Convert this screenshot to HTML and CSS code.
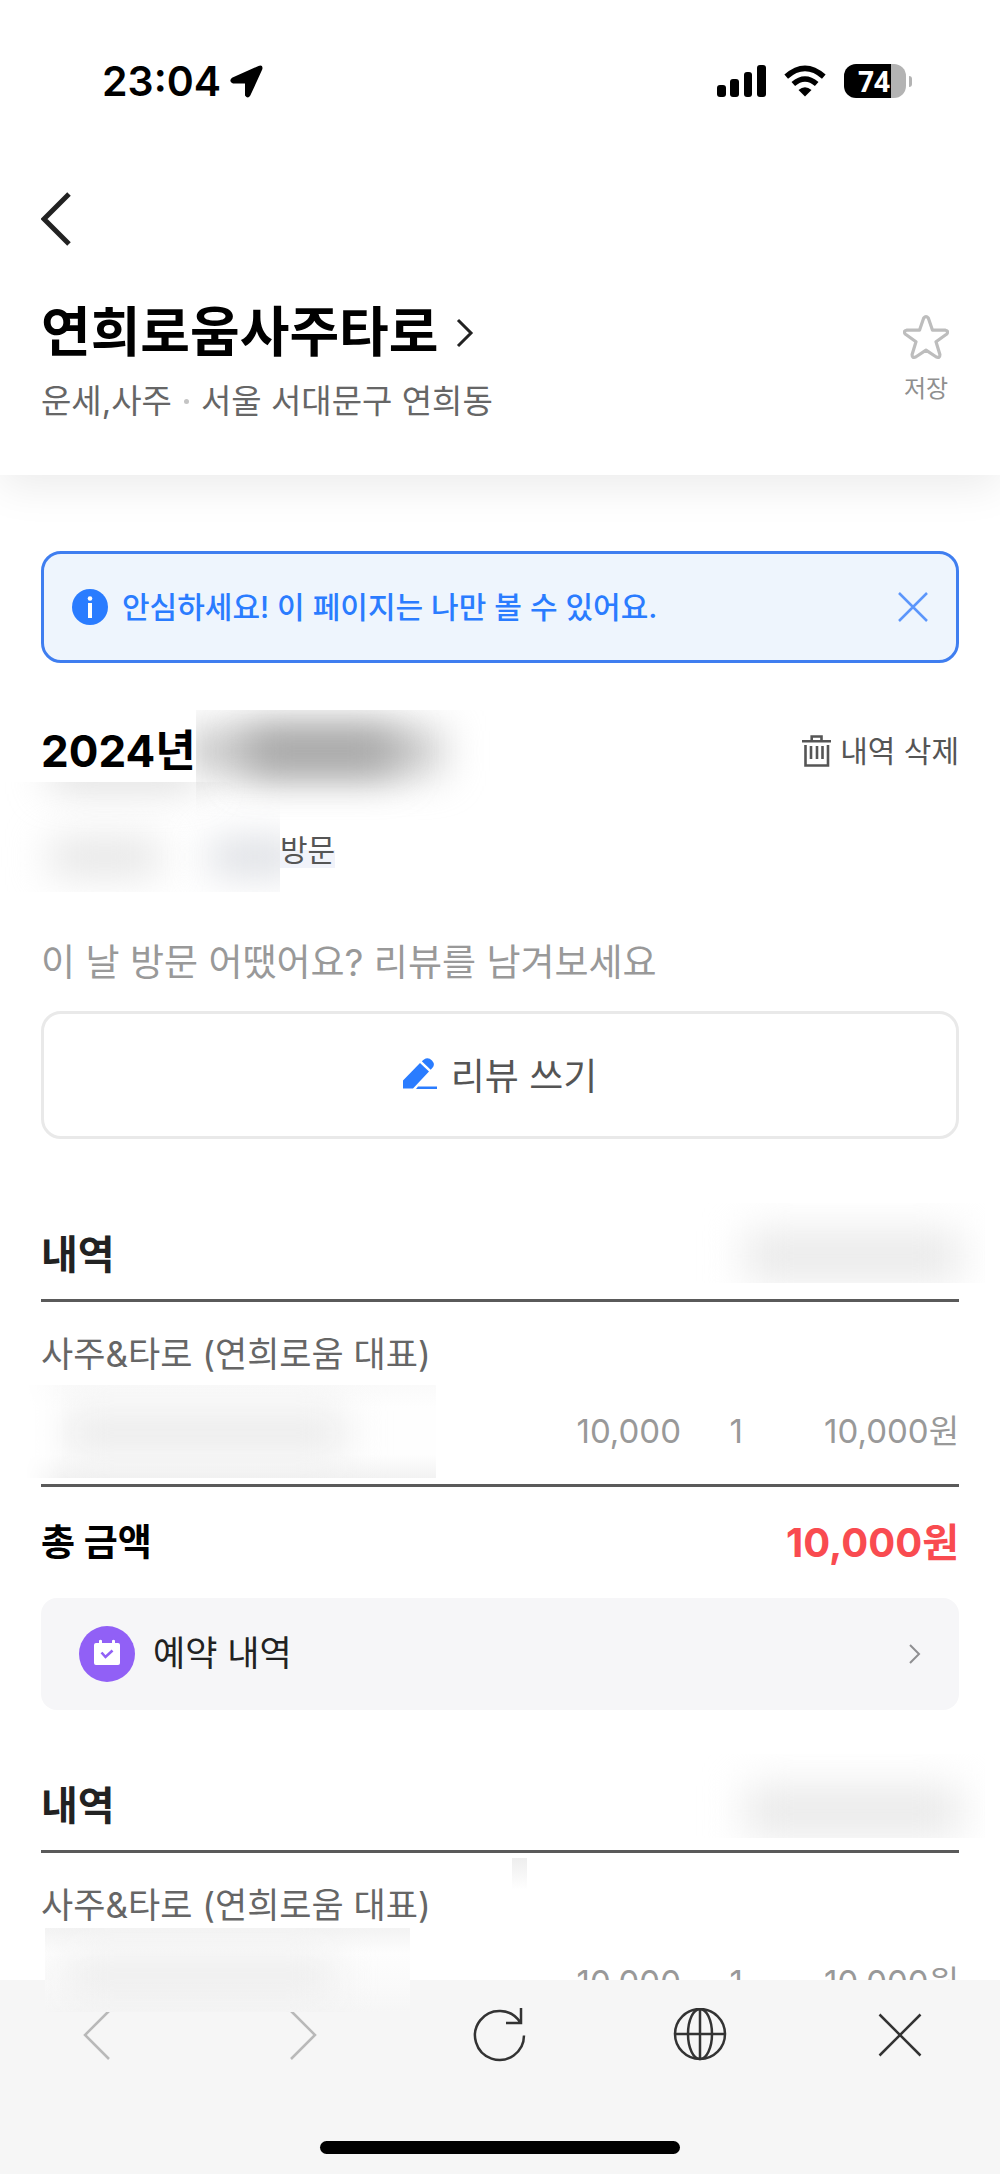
FILE: index.html
```html
<!DOCTYPE html>
<html lang="ko">
<head>
<meta charset="utf-8">
<meta name="viewport" content="width=device-width, initial-scale=1">
<title>연희로움사주타로</title>
<link rel="stylesheet" href="styles.css">
</head>
<body>
<div class="app">
  <div class="status">
    <div class="status-left">
      <time class="clock">23:04</time>
      <svg width="33" height="33" viewBox="0 0 33 33" aria-hidden="true"><path d="M2 12.800 28.500 .9Q33.600-.6 32.200 4.600L20.300 30.600Q17.800 34.500 15 30.600V18.600H3Q-1.800 16.500 2 12.800Z"/></svg>
    </div>
    <div class="status-right">
      <svg width="49" height="32" viewBox="0 0 49 32" aria-hidden="true"><rect y="20" width="9" height="12" rx="3"/><rect x="13" y="14" width="9" height="18" rx="3"/><rect x="27" y="7" width="8" height="25" rx="3"/><rect x="40" y="0" width="9" height="32" rx="3"/></svg>
      <svg width="42" height="32" viewBox="0 0 42 32" aria-hidden="true"><path d="M21 31.500 14.500 25Q21 19.500 27.500 25Z"/><g fill="none" stroke="#000" stroke-width="5.500"><path d="M2.200 11.600Q21-5 39.800 11.600"/><path d="M9.300 19Q21 9 32.700 19"/></g></svg>
      <div class="battery"><span class="battery-body">74</span><span class="battery-tip"></span></div>
    </div>
  </div>

  <header class="header">
    <button class="icon-button back" aria-label="뒤로"><svg width="32" height="54" viewBox="0 0 32 54" aria-hidden="true"><path d="M28 2 3 27 28 52" fill="none" stroke="#222" stroke-width="5"/></svg></button>
    <div class="place">
      <div>
        <h1><a href="#place">연희로움사주타로<svg width="18" height="30" viewBox="0 0 18 30" aria-hidden="true"><path d="M2 2 15 15 2 28" fill="none" stroke="#222" stroke-width="3"/></svg></a></h1>
        <p class="place-info">운세,사주<span class="dot"></span>서울 서대문구 연희동</p>
      </div>
      <button class="save"><svg width="46" height="44" viewBox="0 0 46 44" aria-hidden="true"><path d="M20.700 3Q23 .2 25.300 3L29.500 15.200H42.500Q46 16 43.800 19L33 26.800 36.900 39.500Q37 43.500 33.300 42L23 35.200 12.700 42Q9 43.500 9.100 39.500L13 26.800 2.200 19Q0 16 3.500 15.200H16.500Z" fill="none" stroke="#bdbdbd" stroke-width="3.200" stroke-linejoin="round"/></svg>저장</button>
    </div>
  </header>

  <main class="content">
    <div class="notice">
      <svg width="36" height="36" viewBox="0 0 36 36" aria-hidden="true"><circle cx="18" cy="18" r="18" fill="#2a7cff"/><circle cx="18" cy="9.500" r="2.300" fill="#fff"/><path d="M18 14V29" stroke="#fff" stroke-width="4"/></svg>
      <p>안심하세요! 이 페이지는 나만 볼 수 있어요.</p>
      <button class="icon-button" aria-label="닫기"><svg width="30" height="30" viewBox="0 0 30 30" aria-hidden="true"><path d="M1 1 29 29M29 1 1 29" stroke="#5c96fb" stroke-width="2.500"/></svg></button>
    </div>

    <section class="visit">
      <div class="visit-head">
        <h2>2024년</h2>
        <span class="smudge smudge-date"><i></i><i></i></span>
        <button class="delete"><svg width="30" height="32" viewBox="0 0 30 32" aria-hidden="true"><g fill="none" stroke="#555" stroke-width="2.600"><path d="M0 6.300H29M9.700 6V1.500H19.500V6M3.500 10V30.500H26V10M9 11V24M15 11V24M20.500 11V24"/></g></svg>내역 삭제</button>
      </div>
      <p class="visit-count"><span class="smudge smudge-count"><i></i><i></i><i></i></span><mark>방문</mark></p>
      <p class="hint">이 날 방문 어땠어요? 리뷰를 남겨보세요</p>
      <button class="review"><svg width="34" height="32" viewBox="0 0 34 32" aria-hidden="true"><path d="M0 30.500V22.500L17 5 26 13.500 10 30.500ZM18.800 3.200 21 1.500Q25-1.500 29 2.500 32.500 6.500 29.500 9.800L27.700 11.800ZM15 28.500H34V31H13Z" fill="#2a7cff"/></svg>리뷰 쓰기</button>
    </section>

    <section class="bill">
      <div class="bill-head"><h3>내역</h3><span class="smudge smudge-no"><i></i></span></div>
      <table>
        <colgroup><col><col class="col-price"><col class="col-qty"><col class="col-sum"></colgroup>
        <tbody>
          <tr><th colspan="4" scope="rowgroup">사주&amp;타로 (연희로움 대표)</th></tr>
          <tr><td><span class="smudge smudge-item"><i></i></span></td><td>10,000</td><td>1</td><td>10,000원</td></tr>
        </tbody>
      </table>
      <div class="total"><strong>총 금액</strong><strong class="amount">10,000원</strong></div>
      <a class="booking" href="#booking">
        <svg width="56" height="56" viewBox="0 0 56 56" aria-hidden="true"><circle cx="28" cy="28" r="28" fill="#9160f6"/><path d="M15 19Q15 17 17 17H20V14.500Q21.500 13 23 14.500V17H33V14.500Q34.500 13 36 14.500V17H39Q41 17 41 19V37Q41 39 39 39H17Q15 39 15 37Z" fill="#fff"/><path d="M22.500 26.500 26.500 31 33.500 24.500" fill="none" stroke="#9160f6" stroke-width="2.600"/></svg>
        <span>예약 내역</span>
        <svg width="12" height="20" viewBox="0 0 12 20" aria-hidden="true"><path d="M1 1 10 10 1 19" fill="none" stroke="#8f8f92" stroke-width="2"/></svg>
      </a>
    </section>

    <section class="bill">
      <div class="bill-head"><h3>내역</h3><span class="smudge smudge-no smudge-wide"><i></i></span></div>
      <table>
        <colgroup><col><col class="col-price"><col class="col-qty"><col class="col-sum"></colgroup>
        <tbody>
          <tr><th colspan="4" scope="rowgroup">사주&amp;타로 (연희로움 대표)</th></tr>
          <tr><td></td><td>10,000</td><td>1</td><td>10,000원</td></tr>
        </tbody>
      </table>
      <span class="smudge smudge-speck"></span>
    </section>
  </main>

  <footer class="toolbar">
    <span class="smudge smudge-last"><i></i></span>
    <nav class="tools" aria-label="브라우저">
      <button class="icon-button" aria-label="이전" disabled><svg width="54" height="54" viewBox="0 0 54 54" aria-hidden="true"><path d="M36 3 12 27 36 51" fill="none" stroke="#b9b9b9" stroke-width="2.500"/></svg></button>
      <button class="icon-button" aria-label="다음" disabled><svg width="54" height="54" viewBox="0 0 54 54" aria-hidden="true"><path d="M18 3 42 27 18 51" fill="none" stroke="#b9b9b9" stroke-width="2.500"/></svg></button>
      <button class="icon-button" aria-label="새로고침"><svg width="54" height="54" viewBox="0 0 54 54" aria-hidden="true"><path d="M51 27.500A24.500 24.500 0 1 1 47 14M48 0V15H33" fill="none" stroke="#333" stroke-width="2.500"/></svg></button>
      <button class="icon-button" aria-label="언어"><svg width="54" height="54" viewBox="0 0 54 54" aria-hidden="true"><g fill="none" stroke="#333" stroke-width="2.500"><circle cx="27" cy="26" r="25"/><ellipse cx="27" cy="26" rx="12" ry="25"/><path d="M27 1V51M2 26H52"/></g></svg></button>
      <button class="icon-button" aria-label="닫기"><svg width="54" height="54" viewBox="0 0 54 54" aria-hidden="true"><path d="M6.500 6.500 47.500 47.500M47.500 6.500 6.500 47.500" stroke="#333" stroke-width="2.500"/></svg></button>
    </nav>
    <div class="home"></div>
  </footer>
</div>
</body>
</html>
```
FILE: styles.css
```css
* { box-sizing: border-box; }
body, h1, h2, h3, p { margin: 0; }
body {
  background: #fff;
  color: #000;
  font-family: Inter, "Noto Sans CJK KR", sans-serif;
}
svg { display: block; flex: none; }
a { color: inherit; text-decoration: none; }
button {
  padding: 0;
  border: 0;
  background: none;
  color: inherit;
  font: inherit;
}
.icon-button { display: grid; place-items: center; }

.app {
  display: flex;
  flex-direction: column;
  height: 100vh;
}

/* Status bar */
.status {
  display: flex;
  justify-content: space-between;
  align-items: center;
  height: 160px;
  padding: 2px 88px 0 102px;
}
.status-left { display: flex; align-items: center; gap: 9px; }
.clock { font-size: 41px; font-weight: 600; line-height: 48px; }
.status-right { display: flex; align-items: center; gap: 18px; }
.battery { display: flex; align-items: center; gap: 3px; }
.battery-body {
  width: 62px;
  height: 34px;
  padding-right: 2px;
  border-radius: 12px;
  background: linear-gradient(90deg, #000 47px, #b3b3b3 47px);
  color: #fff;
  font: 700 28px/34px "Noto Sans", sans-serif;
  text-align: center;
}
.battery-tip { width: 3px; height: 11px; border-radius: 0 6px 6px 0; background: #b3b3b3; }

/* Place header */
.header {
  flex: none;
  padding: 32px 41px 50px;
  background: #fff;
  box-shadow: 0 12px 40px rgba(0, 0, 0, .08);
  clip-path: inset(0 0 -80px 0);
}
.back { margin-bottom: 51px; }
.place { display: flex; justify-content: space-between; align-items: center; }
h1 { font-size: 54px; font-weight: 700; line-height: 72px; }
h1 a { display: flex; align-items: center; gap: 18px; }
.place-info {
  display: flex;
  align-items: center;
  margin-top: 8px;
  color: #666;
  font-size: 33px;
  line-height: 48px;
}
.dot { width: 5px; height: 5px; margin: 0 12px; border-radius: 50%; background: #c4c4c4; }
.save {
  display: flex;
  flex-direction: column;
  align-items: center;
  gap: 12px;
  margin-right: 10px;
  color: #8f8f8f;
  font-size: 24px;
  line-height: 36px;
}

/* Content */
.content {
  flex: 1;
  min-height: 0;
  overflow: auto;
  scrollbar-width: none;
  padding: 76px 41px 0;
}
.notice {
  display: flex;
  align-items: center;
  gap: 14px;
  height: 112px;
  padding: 0 28px;
  border: 3px solid #3f7ef0;
  border-radius: 20px;
  background: #eef5fd;
  color: #2a7cff;
  font-size: 30px;
  font-weight: 500;
  line-height: 48px;
}
.notice p { flex: 1; }

.visit { margin-top: 56px; }
.visit-head {
  position: relative;
  display: flex;
  justify-content: space-between;
  align-items: center;
}
h2 { font-size: 44px; font-weight: 700; line-height: 64px; }
.delete {
  display: flex;
  align-items: center;
  gap: 8px;
  color: #555;
  font-size: 30px;
  line-height: 48px;
}
.visit-count {
  position: relative;
  margin-top: 43px;
  padding-left: 239px;
  color: #555;
  font-size: 30px;
  line-height: 48px;
}
.visit-count mark { background: linear-gradient(#fff 50%, #f1f3fa 50%); color: inherit; }
.hint {
  margin-top: 61px;
  color: #999;
  font-size: 37px;
  line-height: 56px;
}
.review {
  display: flex;
  justify-content: center;
  align-items: center;
  gap: 14px;
  width: 100%;
  height: 128px;
  margin-top: 20px;
  padding-bottom: 2px;
  border: 3px solid #e9e9e9;
  border-radius: 20px;
  color: #555;
  font-size: 37px;
}

/* Bill */
.bill { position: relative; margin-top: 88px; }
.bill-head { position: relative; }
h3 { color: #222; font-size: 40px; font-weight: 700; line-height: 56px; }
table {
  width: 100%;
  margin-top: 16px;
  border-collapse: collapse;
  border-top: 3px solid #5a5a5a;
  border-bottom: 3px solid #5a5a5a;
  table-layout: fixed;
}
.col-price { width: 162px; }
.col-qty { width: 62px; }
.col-sum { width: 216px; }
th {
  padding: 26px 0 14px;
  color: #666;
  font-size: 35px;
  font-weight: 400;
  line-height: 52px;
  text-align: left;
}
td {
  position: relative;
  height: 91px;
  padding: 0 0 15px;
  color: #999;
  font-size: 33px;
  line-height: 48px;
  text-align: right;
}
.total {
  display: flex;
  justify-content: space-between;
  align-items: center;
  padding: 27px 0 26px;
  font-size: 37px;
  line-height: 58px;
}
.amount { color: #f94b50; font-size: 40px; }
.booking {
  display: flex;
  align-items: center;
  gap: 18px;
  height: 112px;
  padding: 0 38px;
  border-radius: 16px;
  background: #f6f6f8;
  color: #222;
  font-size: 35px;
  line-height: 52px;
}
.booking span { flex: 1; padding-bottom: 2px; }
.bill + .bill { margin-top: 68px; }

/* Obscured private details: soft smudges cropped to a hard-edged box */
.smudge { position: absolute; overflow: hidden; pointer-events: none; }
.smudge i { position: absolute; filter: blur(20px); background: #ececec; }
.smudge-date { left: 155px; top: -9px; width: 320px; height: 110px; }
.smudge-date i { left: -10px; top: 20px; width: 255px; height: 42px; background: #c2c2c2; }
.smudge-date i + i { left: 50px; width: 150px; background: #a0a0a0; }
.smudge-count { left: -41px; top: -44px; width: 280px; height: 110px; }
.smudge-count i { left: 50px; top: 60px; width: 110px; height: 30px; background: #dedede; }
.smudge-count i + i { left: 210px; width: 90px; background: #d3d6dc; }
.smudge-count i + i + i { left: 50px; top: -18px; width: 150px; height: 20px; background: #c8c8c8; }
.smudge-no { right: -26px; top: -24px; width: 302px; height: 80px; }
.smudge-no i { right: 24px; bottom: 2px; width: 216px; height: 50px; background: #e9e9e9; }
.smudge-no.smudge-wide { width: 330px; height: 84px; }
.smudge-item {
  left: -16px;
  top: -9px;
  width: 411px;
  height: 93px;
  background: linear-gradient(#fafafa, #fefefe 25%, #fefefe 75%, #f2f2f2);
  mask-image: linear-gradient(90deg, transparent, #000 40px);
}
.smudge-item i { left: 40px; top: 26px; width: 280px; height: 44px; background: #eaeaea; }
.smudge-speck { left: 471px; top: 80px; width: 15px; height: 32px; background: linear-gradient(#eee, #fff); }
.smudge-last {
  left: 45px;
  top: -52px;
  width: 365px;
  height: 84px;
  background: linear-gradient(#f3f3f3, #fdfdfd 30%, #fafafa 70%, #f6f6f6);
}
.smudge-last i { left: 20px; top: 28px; width: 270px; height: 40px; background: #ececec; }

/* Browser toolbar */
.toolbar {
  position: relative;
  flex: none;
  height: 194px;
  padding-top: 28px;
  background: #f6f6f6;
}
.tools { display: grid; grid-template-columns: repeat(5, 1fr); }
.home {
  width: 36%;
  height: 13px;
  margin: 79px auto 0;
  border-radius: 7px;
  background: #000;
}
```
